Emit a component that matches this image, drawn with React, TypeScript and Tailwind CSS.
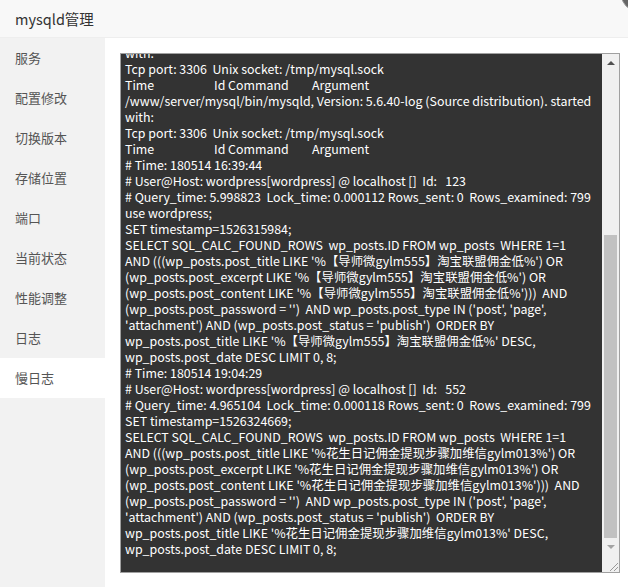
import React from "react";

const menu = ["服务", "配置修改", "切换版本", "存储位置", "端口", "当前状态", "性能调整", "日志", "慢日志"];

const TimeLine = () => (
  <div className="flex whitespace-pre">
    <span className="w-[89px]">Time</span>
    <span className="w-[98px]">Id Command</span>
    <span>Argument</span>
  </div>
);

const lines: (string | null)[] = [
  "with:",
  "Tcp port: 3306  Unix socket: /tmp/mysql.sock",
  null,
  "/www/server/mysql/bin/mysqld, Version: 5.6.40-log (Source distribution). started",
  "with:",
  "Tcp port: 3306  Unix socket: /tmp/mysql.sock",
  null,
  "# Time: 180514 16:39:44",
  "# User@Host: wordpress[wordpress] @ localhost []  Id:   123",
  "# Query_time: 5.998823  Lock_time: 0.000112 Rows_sent: 0  Rows_examined: 799",
  "use wordpress;",
  "SET timestamp=1526315984;",
  "SELECT SQL_CALC_FOUND_ROWS  wp_posts.ID FROM wp_posts  WHERE 1=1",
  "AND (((wp_posts.post_title LIKE '%【导师微gylm555】淘宝联盟佣金低%') OR",
  "(wp_posts.post_excerpt LIKE '%【导师微gylm555】淘宝联盟佣金低%') OR",
  "(wp_posts.post_content LIKE '%【导师微gylm555】淘宝联盟佣金低%')))  AND",
  "(wp_posts.post_password = '')  AND wp_posts.post_type IN ('post', 'page',",
  "'attachment') AND (wp_posts.post_status = 'publish')  ORDER BY",
  "wp_posts.post_title LIKE '%【导师微gylm555】淘宝联盟佣金低%' DESC,",
  "wp_posts.post_date DESC LIMIT 0, 8;",
  "# Time: 180514 19:04:29",
  "# User@Host: wordpress[wordpress] @ localhost []  Id:   552",
  "# Query_time: 4.965104  Lock_time: 0.000118 Rows_sent: 0  Rows_examined: 799",
  "SET timestamp=1526324669;",
  "SELECT SQL_CALC_FOUND_ROWS  wp_posts.ID FROM wp_posts  WHERE 1=1",
  "AND (((wp_posts.post_title LIKE '%花生日记佣金提现步骤加维信gylm013%') OR",
  "(wp_posts.post_excerpt LIKE '%花生日记佣金提现步骤加维信gylm013%') OR",
  "(wp_posts.post_content LIKE '%花生日记佣金提现步骤加维信gylm013%')))  AND",
  "(wp_posts.post_password = '')  AND wp_posts.post_type IN ('post', 'page',",
  "'attachment') AND (wp_posts.post_status = 'publish')  ORDER BY",
  "wp_posts.post_title LIKE '%花生日记佣金提现步骤加维信gylm013%' DESC,",
  "wp_posts.post_date DESC LIMIT 0, 8;",
];

export default function App() {
  return (
    <div
      className="relative w-[628px] h-[587px] overflow-hidden bg-white flex flex-col"
      style={{ fontFamily: '"Noto Sans CJK SC", "Noto Sans", sans-serif' }}
    >
      <div className="absolute left-[621px] top-[-21px] w-[32px] h-[32px] rounded-full bg-[#666] border border-[#999]" />
      <div className="h-[38px] shrink-0 bg-[#f8f8f8] border-b border-[#eeeeee] flex items-center pl-[15px] text-[14.5px] text-[#333]">
        mysqld管理
      </div>
      <div className="flex flex-1 min-h-0">
        <div className="w-[105px] shrink-0 bg-[#f2f2f2] flex flex-col">
          {menu.map((m) => (
            <div
              key={m}
              className={
                "h-[40px] flex items-center pl-[15px] text-[13px] text-[#555] " +
                (m === "慢日志" ? "bg-white" : "")
              }
            >
              {m}
            </div>
          ))}
        </div>
        <div className="flex-1 pl-[15px] pt-[15px]">
          <div className="w-[500px] h-[520px] border border-[#a0a0a0] bg-[#333333] flex">
            <div className="flex-1 overflow-hidden pl-[4px]">
              <div className="mt-[-9px] text-white text-[12.4px] leading-[16px]">
                {lines.map((l, i) =>
                  l === null ? (
                    <TimeLine key={i} />
                  ) : (
                    <div key={i} className="whitespace-pre">
                      {l}
                    </div>
                  )
                )}
              </div>
            </div>
            <div className="w-[17px] shrink-0 bg-[#f0f0f0] flex flex-col">
              <div className="h-[17px] flex items-center justify-center">
                <div className="w-0 h-0 border-l-[4px] border-r-[4px] border-b-[4px] border-l-transparent border-r-transparent border-b-[#505050]" />
              </div>
              <div className="flex-1 flex flex-col pl-[2px] pr-[2px]">
                <div className="h-[164px]" />
                <div className="flex-1 bg-[#c1c1c1]" />
              </div>
              <div className="h-[17px] flex items-center justify-center">
                <div className="w-0 h-0 border-l-[4px] border-r-[4px] border-t-[4px] border-l-transparent border-r-transparent border-t-[#a3a3a3]" />
              </div>
              <div className="h-[17px] bg-[#f0f0f0] flex items-end justify-end">
                <svg width="12" height="12" viewBox="0 0 12 12">
                  <line x1="11" y1="3" x2="3" y2="11" stroke="#999" strokeWidth="1" />
                  <line x1="11" y1="7" x2="7" y2="11" stroke="#999" strokeWidth="1" />
                </svg>
              </div>
            </div>
          </div>
        </div>
      </div>
    </div>
  );
}
